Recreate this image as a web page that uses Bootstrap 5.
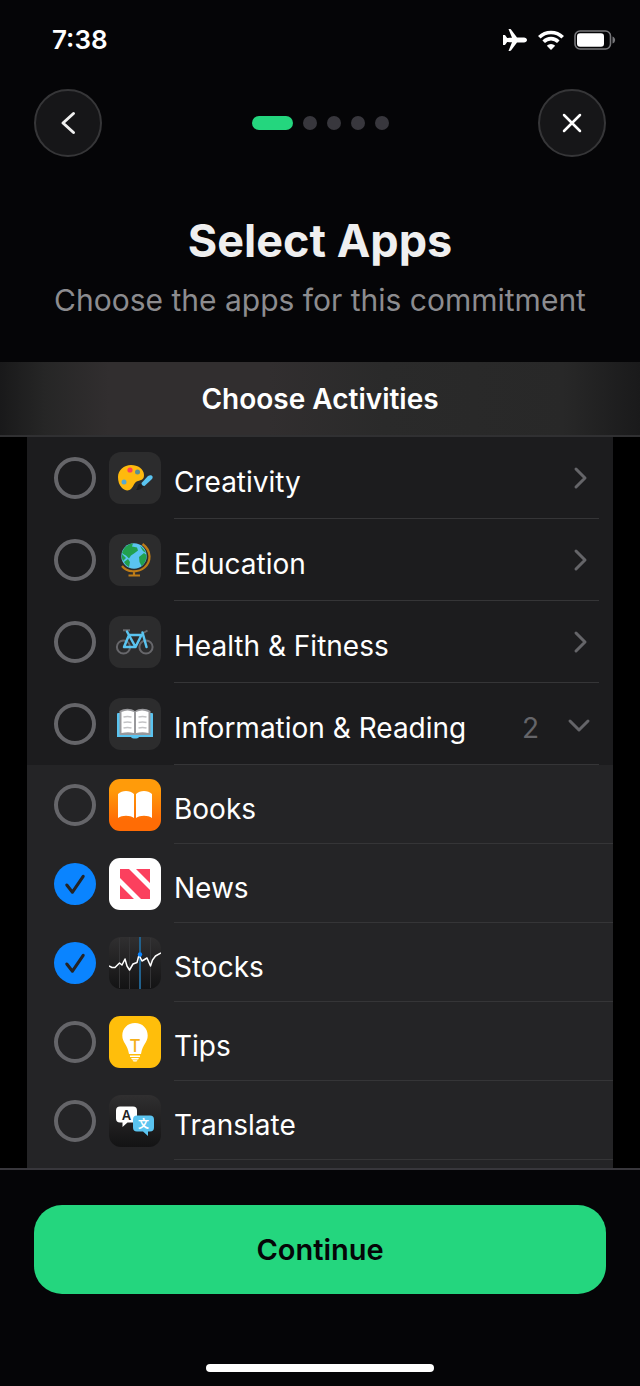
<!DOCTYPE html>
<html lang="en" data-bs-theme="dark">
<head>
<meta charset="utf-8">
<meta name="viewport" content="width=device-width, initial-scale=1">
<title>Select Apps</title>
<link href="https://cdn.jsdelivr.net/npm/bootstrap@5.3.0/dist/css/bootstrap.min.css" rel="stylesheet">
<style>
  body { background: #050507; color: #fff; font-family: Inter, "Noto Sans CJK SC", sans-serif; }
  .status-bar { height: 79px; padding: 0 24px 0 52px; font-size: 26px; font-weight: 600; }
  .top-nav { padding: 10px 34px 0; }
  .round-btn { width: 68px; height: 68px; background: #161618; border: 2px solid #363638; color: #fff; }
  .steps { gap: 10px; }
  .step { width: 14px; height: 14px; border-radius: 7px; background: #38373d; }
  .step.current { width: 41px; background: #24d67e; }
  .intro { padding: 52px 16px 42px; }
  .intro h1 { font-size: 45px; line-height: 64px; font-weight: 700; color: #efefef; }
  .intro p { font-size: 30px; line-height: 40px; color: #8c8c8f; margin-top: 7px; }
  .picker-head { height: 75px; padding-top: 2px; border-bottom: 2px solid #303032; font-size: 28px; font-weight: 600;
    background: linear-gradient(90deg, #19191a 0%, #262626 7%, #312e2f 17%, #312e2f 42%, #2a2a2a 60%, #282828 88%, #1a1a1b 100%); }
  .picker { background: #000; padding: 0 27px; }
  .picker-list { background: #242426; }
  .group-row { background: #1c1c1e; height: 82px; padding: 0 14px 0 27px; }
  .app-row { height: 79px; padding-left: 27px; }
  .tick { appearance: none; flex: none; width: 42px; height: 42px; margin: 0 13px 0 0; border: 4px solid #656569; border-radius: 50%; background: transparent center/42px no-repeat; }
  .tick:checked { border: 0; background-color: #0a84ff;
    background-image: url("data:image/svg+xml,%3Csvg xmlns='http://www.w3.org/2000/svg' viewBox='0 0 41 41'%3E%3Cpath d='M12.500 21.500l5.500 7L28.500 13' fill='none' stroke='%23242426' stroke-width='3' stroke-linecap='round' stroke-linejoin='round'/%3E%3C/svg%3E"); }
  .app-icon { flex: none; width: 52px; height: 52px; margin-right: 13px; }
  .row-main { border-bottom: 1px solid #353537; }
  .row-text { font-size: 28px; line-height: 40px; padding-top: 9px; }
  .count { color: #656569; margin-right: 20px; }
  .chev { color: #656569; padding: 0; border: 0; background: none; width: 40px; }
  .action-bar { border-top: 2px solid #38373c; padding: 35px 34px 0; }
  .btn-go { height: 89px; border-radius: 28px; background: #24d67e; border: 0; color: #050507; font-size: 29px; font-weight: 600; }
  .home-bar { width: 40%; height: 8px; border-radius: 4px; background: #fff; margin: 70px auto 14px; }
</style>
</head>
<body class="d-flex flex-column min-vh-100">
<header>
  <div class="status-bar d-flex align-items-center justify-content-between">
    <span>7:38</span>
    <div class="d-flex align-items-center">
      <svg width="24" height="22" viewBox="0 0 24 22" fill="#fff" aria-label="Airplane mode"><path d="M14 8.500h7c1.500 0 3 1.200 3 2.500s-1.500 2.500-3 2.500h-7L8 21.500c-.4.500-1 .5-2.500.4L9 13.300l-4.800-.2L2 16H0V6h2l2.200 2.900L9 8.700 5.500.1C7 0 7.600 0 8 .5z"/></svg>
      <svg class="ms-2" width="31" height="20" viewBox="-3 0 31 20" aria-label="Wi-Fi"><g fill="none" stroke="#fff" stroke-width="3.600"><path d="M1.300 7.300a16.500 16.500 0 0 1 23.400 0"/><path d="M5.700 11.700a10.300 10.300 0 0 1 14.600 0"/></g><path d="M13 20l-4.200-4.200a6 6 0 0 1 8.400 0z" fill="#fff"/></svg>
      <svg class="ms-2" width="42" height="20" viewBox="0 0 42 20" aria-label="Battery"><rect x="1" y="1" width="35.500" height="18" rx="5" fill="none" stroke="#77777a" stroke-width="1.600"/><rect x="3" y="3.200" width="27" height="13.600" rx="3" fill="#fff"/><path d="M38.500 6.500c3.500 1 3.500 6 0 7z" fill="#77777a"/></svg>
    </div>
  </div>
  <nav class="top-nav d-flex align-items-center justify-content-between" aria-label="Setup">
    <button class="round-btn rounded-circle p-0 d-flex align-items-center justify-content-center" type="button" aria-label="Back">
      <svg width="24" height="24" viewBox="0 0 24 24" fill="none" stroke="#efefef" stroke-width="3" stroke-linecap="round" stroke-linejoin="round"><path d="M17.500 2.500L7 12l10.500 9.500"/></svg>
    </button>
    <div class="steps d-flex align-items-center">
      <span class="step current"></span><span class="step"></span><span class="step"></span><span class="step"></span><span class="step"></span>
    </div>
    <button class="round-btn rounded-circle p-0 d-flex align-items-center justify-content-center" type="button" aria-label="Close">
      <svg width="24" height="24" viewBox="0 0 24 24" fill="none" stroke="#fff" stroke-width="2.500" stroke-linecap="round"><path d="M4 4l16 16M20 4L4 20"/></svg>
    </button>
  </nav>
  <div class="intro text-center">
    <h1 class="mb-0">Select Apps</h1>
    <p class="mb-0">Choose the apps for this commitment</p>
  </div>
</header>

<main class="flex-grow-1 d-flex flex-column">
  <h2 class="picker-head mb-0 d-flex align-items-center justify-content-center">Choose Activities</h2>
  <div class="picker flex-grow-1 d-flex flex-column">
    <div class="picker-list flex-grow-1">
      <div class="group-row d-flex align-items-center">
        <input class="tick" type="checkbox" id="c1">
        <svg class="app-icon" viewBox="0 0 52 52"><rect width="52" height="52" rx="12" fill="#2c2c2d"/><path d="M9 25C9 18 15 13 22 13c7 0 13 4 13 10 0 5-3 5-6 6-4 1-4 5-7 8-2 2-6 2-9-1-3-3-4-7-4-11z" fill="#ffb90d"/><circle cx="21" cy="18" r="2.600" fill="#ff4057"/><circle cx="28.500" cy="20" r="2.500" fill="#5b8f94"/><circle cx="15" cy="30" r="2.500" fill="#58a9cf"/><path d="M33 32l2 2-2 2c-2 2-4 2-6 2 2-2 1-4 3-6z" fill="#1d1d1e"/><path d="M32.500 31l6.500-7c3-2 6 0 4 3l-7.500 7c-2 0-3-1-3-3z" fill="#5ac4f0"/></svg>
        <div class="row-main flex-grow-1 h-100 d-flex align-items-center"><label class="row-text flex-grow-1" for="c1">Creativity</label>
          <button class="chev" type="button" aria-label="Expand Creativity"><svg width="24" height="24" viewBox="0 0 24 24" fill="none" stroke="currentColor" stroke-width="3" stroke-linecap="round" stroke-linejoin="round"><path d="M9 3l9 9-9 9"/></svg></button></div>
      </div>
      <div class="group-row d-flex align-items-center">
        <input class="tick" type="checkbox" id="c2">
        <svg class="app-icon" viewBox="0 0 52 52"><rect width="52" height="52" rx="12" fill="#2c2c2d"/><circle cx="25" cy="22" r="12.700" fill="#5ac4f0"/><path d="M13 19c2-6 6-9 11-9.500l-1 3 5 1 1 3-4 3-3 2-2 3-3-3-2-1zM15 28l4-3 2 3-1 5c-2-1-4-3-5-5zM13 20l4 4-3 3c-1-2-1.500-5-1-7zM30 23l5-4 2.500 2c0 5-2 9-5 11l-2-4zM31 12c3 2 5 4 6 7l-3-2z" fill="#22a04e"/><path d="M33.500 10C43 17 42 28 35.500 33.500 29 39 18 38.500 13 32M25 37.500V41M19.500 41.500h11.500" fill="none" stroke="#bd7c18" stroke-width="2.200"/></svg>
        <div class="row-main flex-grow-1 h-100 d-flex align-items-center"><label class="row-text flex-grow-1" for="c2">Education</label>
          <button class="chev" type="button" aria-label="Expand Education"><svg width="24" height="24" viewBox="0 0 24 24" fill="none" stroke="currentColor" stroke-width="3" stroke-linecap="round" stroke-linejoin="round"><path d="M9 3l9 9-9 9"/></svg></button></div>
      </div>
      <div class="group-row d-flex align-items-center">
        <input class="tick" type="checkbox" id="c3">
        <svg class="app-icon" viewBox="0 0 52 52"><rect width="52" height="52" rx="12" fill="#2c2c2d"/><g fill="none" stroke-linejoin="round"><g stroke="#67676b" stroke-width="2"><circle cx="14.500" cy="31" r="6.600"/><circle cx="37" cy="31" r="6.600"/><path d="M14 14.200h7M33.500 17.500l5-3"/></g><path d="M18 15.500l8.500 15.500L32.500 19H20l-5 12h11.500M33.500 16.500L37.500 31" stroke="#5ac4f0" stroke-width="2.500" stroke-linecap="round"/></g></svg>
        <div class="row-main flex-grow-1 h-100 d-flex align-items-center"><label class="row-text flex-grow-1" for="c3">Health &amp; Fitness</label>
          <button class="chev" type="button" aria-label="Expand Health &amp; Fitness"><svg width="24" height="24" viewBox="0 0 24 24" fill="none" stroke="currentColor" stroke-width="3" stroke-linecap="round" stroke-linejoin="round"><path d="M9 3l9 9-9 9"/></svg></button></div>
      </div>
      <div class="group-row d-flex align-items-center">
        <input class="tick" type="checkbox" id="c4">
        <svg class="app-icon" viewBox="0 0 52 52"><rect width="52" height="52" rx="12" fill="#2c2c2d"/><path d="M9 15h34a1 1 0 0 1 1 1v23H30c-1 2-7 2-8 0H8V16a1 1 0 0 1 1-1z" fill="#5ac4f0"/><path d="M10.500 13c5-3 11-3 15.500 0 4.500-3 10.500-3 15.500 0v24h-31z" fill="#98989b"/><path d="M12.500 14c4-2 8-2 12.500 0v21c-4-1-8-1-12.500 0zM27 14c4-2 8-2 12.500 0v21c-4-1-8-1-12.500 0z" fill="#fff"/><path d="M14.500 19q4-1 8 0M14.500 24.500q4-1 8 0M14.500 30q4-1 8 0M29.500 19q4-1 8 0M29.500 24.500q4-1 8 0M29.500 30q4-1 8 0" fill="none" stroke="#c4c4c6" stroke-width="1.400"/></svg>
        <div class="row-main flex-grow-1 h-100 d-flex align-items-center"><label class="row-text flex-grow-1" for="c4">Information &amp; Reading</label>
          <span class="row-text count">2</span>
          <button class="chev" type="button" aria-label="Collapse Information &amp; Reading"><svg width="24" height="24" viewBox="0 0 24 24" fill="none" stroke="currentColor" stroke-width="3" stroke-linecap="round" stroke-linejoin="round"><path d="M3 9l9 9 9-9"/></svg></button></div>
      </div>

      <div class="app-row d-flex align-items-center">
        <input class="tick" type="checkbox" id="a1">
        <svg class="app-icon" viewBox="0 0 52 52"><defs><linearGradient id="gBooks" x2="0" y2="1"><stop offset=".2" stop-color="#ff9b0a"/><stop offset=".8" stop-color="#ff6c05"/></linearGradient></defs><rect width="52" height="52" rx="11" fill="url(#gBooks)"/><path d="M9 15c4-4 12-4 16 0v24c-4-3-12-3-16 0zM27 15c4-4 12-4 16 0v24c-4-3-12-3-16 0z" fill="#fff"/></svg>
        <div class="row-main flex-grow-1 h-100 d-flex align-items-center"><label class="row-text flex-grow-1" for="a1">Books</label></div>
      </div>
      <div class="app-row d-flex align-items-center">
        <input class="tick" type="checkbox" id="a2" checked>
        <svg class="app-icon" viewBox="0 0 52 52"><rect width="52" height="52" rx="11" fill="#fff"/><path d="M11 11h9l21 21v9h-9L11 20zM27 11h14v14zM11 27v14h14z" fill="#fb405e"/></svg>
        <div class="row-main flex-grow-1 h-100 d-flex align-items-center"><label class="row-text flex-grow-1" for="a2">News</label></div>
      </div>
      <div class="app-row d-flex align-items-center">
        <input class="tick" type="checkbox" id="a3" checked>
        <svg class="app-icon" viewBox="0 0 52 52"><defs><linearGradient id="gDark" x2="0" y2="1"><stop stop-color="#302f30"/><stop offset="1" stop-color="#131314"/></linearGradient></defs><rect width="52" height="52" rx="12" fill="url(#gDark)"/><path d="M10.500 1v50M20.500 0v52M41.500 1v50" stroke="#343436" stroke-width="1"/><path d="M31 0v52" stroke="#21618d" stroke-width="2"/><path d="M0 29l3 1.500h3l4.500-4.500 2.500 2 3-6 2 7 2.500 4 3.500-6 4-1.500L30 18l3 6 5-3 3.500 8 2-6 3-4 5.500-3" fill="none" stroke="#fff" stroke-width="1.500" stroke-linejoin="round"/><circle cx="31" cy="17.500" r="2.200" fill="#0a84ff"/></svg>
        <div class="row-main flex-grow-1 h-100 d-flex align-items-center"><label class="row-text flex-grow-1" for="a3">Stocks</label></div>
      </div>
      <div class="app-row d-flex align-items-center">
        <input class="tick" type="checkbox" id="a4">
        <svg class="app-icon" viewBox="0 0 52 52"><rect width="52" height="52" rx="11" fill="#ffbe0b"/><path d="M26 7c7.500 0 12.700 5.500 12.700 12.500 0 7-5.200 9-6.700 18.500H20c-1.500-9.500-6.700-11.500-6.700-18.500C13.300 12.500 18.500 7 26 7zM21 39.500h10v1.500H21zM22 42h8l-1 1.500h-6zM23.500 44.200h5l-1 1.300h-3z" fill="#fff"/><text x="26" y="35.500" font-size="17" font-weight="500" text-anchor="middle" fill="#f5b01c">T</text></svg>
        <div class="row-main flex-grow-1 h-100 d-flex align-items-center"><label class="row-text flex-grow-1" for="a4">Tips</label></div>
      </div>
      <div class="app-row d-flex align-items-center">
        <input class="tick" type="checkbox" id="a5">
        <svg class="app-icon" viewBox="0 0 52 52"><rect width="52" height="52" rx="12" fill="url(#gDark)"/><path d="M11 11.500h13a4 4 0 0 1 4 4v8a4 4 0 0 1-4 4h-5.500L13.500 32v-4.500H11a4 4 0 0 1-4-4v-8a4 4 0 0 1 4-4z" fill="#fff"/><path d="M28 20.500h13a4 4 0 0 1 4 4v8a4 4 0 0 1-4 4h-2V41l-5-4.500h-6a4 4 0 0 1-4-4v-8a4 4 0 0 1 4-4z" fill="#5ac4f0"/><text x="17.500" y="24.500" font-size="13" font-weight="600" text-anchor="middle" fill="#222">A</text><text x="34.500" y="32.500" font-size="11" font-weight="700" text-anchor="middle" fill="#fff">文</text></svg>
        <div class="row-main flex-grow-1 h-100 d-flex align-items-center"><label class="row-text flex-grow-1" for="a5">Translate</label></div>
      </div>
    </div>
  </div>
</main>

<footer class="action-bar">
  <button class="btn-go w-100" type="button">Continue</button>
  <div class="home-bar"></div>
</footer>
<script src="https://cdn.jsdelivr.net/npm/bootstrap@5.3.0/dist/js/bootstrap.bundle.min.js"></script>
</body>
</html>
